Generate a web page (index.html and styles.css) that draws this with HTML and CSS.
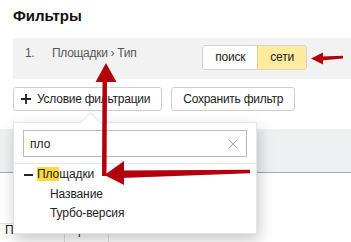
FILE: index.html
```html
<!DOCTYPE html>
<html lang="ru">
<head>
<meta charset="utf-8">
<link rel="stylesheet" href="styles.css">
</head>
<body>
<div class="page">
  <h1 class="title">Фильтры</h1>
  <div class="filter-row">
    <div class="filter-label"><span class="num">1.</span><span>Площадки › Тип</span></div>
    <div class="seg"><span class="seg-btn">поиск</span><span class="seg-btn active">сети</span></div>
  </div>
  <div class="toolbar">
    <button class="btn btn-add"><svg class="plus" width="10" height="10" viewBox="0 0 10 10"><path d="M5 0v10M0 5h10" stroke="#222" stroke-width="1.8"/></svg>Условие фильтрации</button>
    <button class="btn">Сохранить фильтр</button>
  </div>
  <div class="band"></div>
  <div class="table">
    <div class="cell c1">Показы</div>
    <div class="cell c2">Время</div>
    <div class="cell c3">Клики</div>
  </div>
  <div class="popup">
    <div class="search">
      <span class="search-text">пло</span>
      <svg class="clear" width="10" height="10" viewBox="0 0 10 10"><path d="M0.5 0.5l9 9M9.5 0.5l-9 9" stroke="#a0a0a0" stroke-width="1"/></svg>
    </div>
    <div class="list">
      <div class="item parent"><span class="minus"></span><span><span class="hl">Пло</span>щадки</span></div>
      <div class="item child">Название</div>
      <div class="item child">Турбо-версия</div>
    </div>
  </div>
  <svg class="arrows" width="351" height="242" viewBox="0 0 351 242">
    <g fill="#b3000c" stroke="none">
      <polygon points="311,58.5 323,52.5 323,64.5"/>
      <polygon points="321,56.5 343,55.8 343,58.6 321,60.5"/>
      <polygon points="106,63 95.5,82 116.5,82"/>
      <polygon points="102.5,80 107,80 106.5,176 102,176"/>
      <polygon points="104.5,175 124,161 124,185"/>
      <polygon points="121,170.5 250,169.8 250,173.2 121,178"/>
    </g>
  </svg>
</div>
</body>
</html>
```
FILE: styles.css
```css
* { box-sizing: border-box; }
html, body { margin: 0; padding: 0; background: #fff; }
body { font-family: "Liberation Sans", Arial, sans-serif; color: #222; }
.page { position: relative; width: 351px; height: 242px; overflow: hidden; }

.title { margin: 0; padding: 7px 0 0 13px; font-size: 15px; line-height: 18px; font-weight: bold; color: #111; }

.filter-row {
  margin: 13px 0 0 13px; height: 41px; background: #f2f2f2;
  display: flex; justify-content: space-between; align-items: flex-start;
  padding: 7px 44px 0 12px;
}
.filter-label { font-size: 12px; line-height: 16px; color: #555; white-space: nowrap; letter-spacing: -0.3px; }
.num { display: inline-block; width: 27px; }

.seg { display: flex; height: 25px; border: 1px solid #d2d2d2; border-radius: 3px; overflow: hidden; background: #fff; }
.seg-btn { font-size: 12px; line-height: 23px; padding: 0 12px; color: #222; letter-spacing: -0.2px; }
.seg-btn.active { background: #ffeba0; border-left: 1px solid #e3d08a; }

.toolbar { margin: 8px 0 0 13px; display: flex; gap: 9px; }
.btn {
  height: 24px; border: 1px solid #cfcfcf; border-radius: 3px; background: #fff;
  font-family: inherit; font-size: 12px; color: #222; padding: 0 11px; margin: 0;
  display: flex; align-items: center; white-space: nowrap; letter-spacing: -0.25px;
}
.btn-add { padding-left: 7px; }
.plus { margin-right: 6px; }

.band { margin-top: 18px; height: 44px; background: #eff0f2; border-bottom: 1px solid #a8a8a8; }

.table { margin-top: 50px; width: 257px; display: flex; border-top: 1px solid #e2e2e2; height: 30px; }
.cell { font-size: 12px; line-height: 13px; padding: 0 0 0 5px; border-right: 1px solid #dcdcdc; overflow: hidden; white-space: nowrap; }
.c1 { width: 65px; }
.c2 { width: 44px; }
.c3 { flex: 1; border-right: none; }

.popup {
  position: absolute; left: 13px; top: 122px; width: 244px; height: 112px;
  background: #fff; border: 1px solid #e4e4e4;
  box-shadow: 2px 6px 14px rgba(0,0,0,0.22);
  padding-top: 7px; z-index: 2;
}
.popup::before {
  content: ""; position: absolute; left: 69px; top: -8px; width: 14px; height: 14px;
  background: #fff; border-top: 1px solid #e4e4e4; border-left: 1px solid #e4e4e4;
  transform: rotate(45deg);
}
.search {
  position: relative; margin: 0 9px; height: 27px; border: 1px solid #bcbcbc;
  display: flex; align-items: center; padding-left: 6px; background: #fff;
}
.search-text { font-size: 12px; color: #222; }
.clear { margin-left: auto; margin-right: 8px; }

.list { margin-top: 6px; border-top: 1px solid #e6e6e6; padding-top: 1px; }
.item { font-size: 12px; line-height: 19.5px; color: #222; white-space: nowrap; letter-spacing: -0.1px; }
.parent { display: flex; align-items: center; padding-left: 10px; }
.minus { display: inline-block; width: 9px; height: 2px; background: #222; margin-right: 4px; }
.hl { background: #ffd83b; }
.child { padding-left: 36px; }

.arrows { position: absolute; left: 0; top: 0; z-index: 3; pointer-events: none; }
```
